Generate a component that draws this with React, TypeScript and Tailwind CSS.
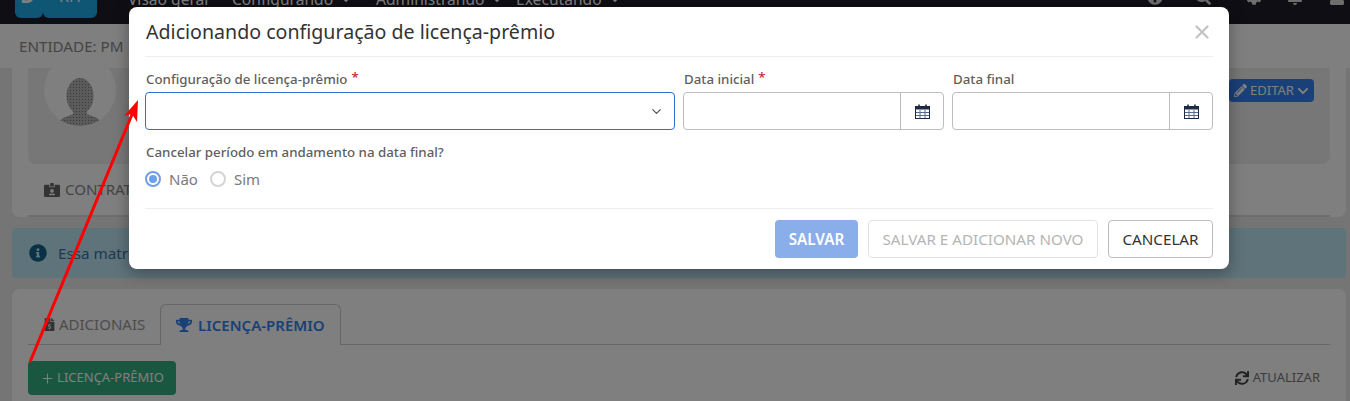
import {
  FaBell,
  FaCaretDown,
  FaChevronDown,
  FaCog,
  FaFileInvoiceDollar,
  FaIdCardAlt,
  FaInfoCircle,
  FaPencilAlt,
  FaQuestionCircle,
  FaSearch,
  FaSync,
  FaTrophy,
  FaUser,
} from "react-icons/fa";
import { ChevronDown, Plus, X } from "lucide-react";

const menu = [
  { label: "Visão geral", caret: false, width: "w-[104px]" },
  { label: "Configurando", caret: true, width: "w-[144px]" },
  { label: "Administrando", caret: true, width: "w-[140px]" },
  { label: "Executando", caret: true, width: "w-[120px]" },
];

function CalendarIcon() {
  return (
    <svg width="15" height="15" viewBox="0 0 15 15" fill="none">
      <rect x="0.5" y="2.5" width="14" height="12" fill="#fff" stroke="#1f2a44" />
      <rect x="0.5" y="2.5" width="14" height="3" fill="#1f2a44" />
      <path d="M5 6v8M10 6v8M1 8.5h13M1 11.5h13" stroke="#5b6b8c" />
      <path d="M4 0.5v3M11 0.5v3" stroke="#1f2a44" strokeWidth="1.6" />
    </svg>
  );
}

function DateInput({ label, required }: { label: string; required?: boolean }) {
  return (
    <div className="w-[261px]">
      <label className="flex h-[20px] items-center gap-1 pl-px text-[13.3px] font-medium text-[#5f5f5f]">
        {label}
        {required && <span className="-mt-1 text-[#c8232c]">*</span>}
      </label>
      <div className="mt-[2px] flex h-[38px] rounded border border-[#bdbdbd]">
        <div className="flex-1" />
        <div className="flex w-[43px] items-center justify-center border-l border-[#bdbdbd]">
          <CalendarIcon />
        </div>
      </div>
    </div>
  );
}

function Radio({ label, checked }: { label: string; checked?: boolean }) {
  return (
    <div className="flex items-center gap-[8px] text-[15px] text-[#7a7a7a]">
      <span
        className={
          checked
            ? "flex size-[16px] items-center justify-center rounded-full border-2 border-[#6f9fe8]"
            : "size-[16px] rounded-full border-2 border-[#d4d4d4]"
        }
      >
        {checked && <span className="size-[8px] rounded-full bg-[#6f9fe8]" />}
      </span>
      {label}
    </div>
  );
}

export default function App() {
  return (
    <div className="relative h-[401px] w-[1350px] overflow-hidden bg-[#ebebeb] [font-family:'Noto_Sans',sans-serif]">
      {/* pagina por tras */}
      <header className="-mt-6 flex h-[48px] items-center justify-between bg-[#1c1c28] pl-[15px] pr-[5px] text-white">
        <div className="flex items-center">
          <div className="flex h-[36px] w-[82px]">
            <div className="w-[28px] rounded-b-md bg-[#1eaae8] pl-[5px] pt-[2px] text-[20px] font-bold leading-[24px]">
              D
            </div>
            <div className="flex-1 rounded-b-md bg-[#1eaae8] pl-[16px] pt-[2px] text-[16px] leading-[24px]">
              RH
            </div>
          </div>
          <nav className="ml-[31px] flex items-center text-[15.6px]">
            {menu.map((m) => (
              <div key={m.label} className={`flex items-center gap-2 ${m.width}`}>
                {m.label}
                {m.caret && <FaCaretDown size={10} />}
              </div>
            ))}
          </nav>
        </div>
        <div className="-mt-[6px] flex items-center text-[16px] text-[#dddddd]">
          <FaQuestionCircle />
          <FaSearch className="ml-[32px]" />
          <FaCog className="ml-[35px]" />
          <FaBell className="ml-[25px]" />
          <FaUser className="ml-[26px]" />
        </div>
      </header>

      <div className="flex h-[44px] items-center bg-white px-[19px] text-[15.2px] text-[#8a8a8a]">
        ENTIDADE: PM
      </div>

      <main className="pl-[12px] pr-[4px]">
        <section className="h-[149px] overflow-hidden rounded-b-lg bg-white px-[16px]">
          <div className="flex h-[96px] items-start justify-between overflow-hidden rounded-b-lg bg-[#eeeeee] px-[16px]">
            <div className="-mt-[14px] flex size-[72px] items-end justify-center overflow-hidden rounded-full bg-white">
              <svg width="44" height="48" viewBox="0 0 44 48">
                <defs>
                  <pattern id="pontos" width="3" height="3" patternUnits="userSpaceOnUse">
                    <rect width="3" height="3" fill="#b6b6b6" />
                    <rect width="1" height="1" fill="#777777" />
                  </pattern>
                </defs>
                <ellipse cx="22" cy="18" rx="13.5" ry="18" fill="url(#pontos)" />
                <path d="M15 30h14v6l10 4q5 3 5 8H0q0-5 5-8l10-4z" fill="url(#pontos)" />
              </svg>
            </div>
            <button className="mt-[11px] flex h-[23px] w-[85px] items-center justify-center gap-[3px] rounded bg-[#3480f0] text-[13px] text-white">
              <FaPencilAlt size={13} />
              EDITAR
              <FaChevronDown size={12} />
            </button>
          </div>
          <div className="flex h-[53px] items-center gap-[5px] border-b-2 border-[#dcdcdc] pl-[16px] text-[15px] text-[#888888]">
            <FaIdCardAlt size={16} className="text-[#666666]" />
            CONTRATOS
          </div>
        </section>

        <div className="mt-[11px] flex h-[50px] items-center gap-[11px] rounded bg-[#bee6f6] pl-[17px] text-[15.2px] text-[#38749f]">
          <FaInfoCircle size={18} className="text-[#14648f]" />
          Essa matrícula
        </div>

        <section className="mt-[11px] h-[120px] rounded-lg bg-white px-[16px] pt-[15px]">
          <div className="flex h-[41px] items-stretch border-b border-[#cccccc] text-[15px]">
            <div className="flex w-[132px] items-center gap-[3px] pl-[15px] text-[#999999]">
              <FaFileInvoiceDollar size={13} className="text-[#666666]" />
              ADICIONAIS
            </div>
            <div className="-mb-px flex w-[181px] items-center gap-[6px] rounded-t-md border border-b-0 border-[#cccccc] bg-white pl-[15px] font-semibold text-[#3480f0]">
              <FaTrophy size={16} />
              LICENÇA-PRÊMIO
            </div>
          </div>
          <div className="mt-[16px] flex items-center justify-between pr-[10px]">
            <button className="flex h-[34px] w-[148px] items-center justify-center gap-[2px] rounded bg-[#34ae80] text-[13px] text-white">
              <Plus size={15} strokeWidth={1.75} />
              LICENÇA-PRÊMIO
            </button>
            <div className="flex items-center gap-[4px] text-[13px] text-[#777777]">
              <FaSync size={14} className="text-[#444444]" />
              ATUALIZAR
            </div>
          </div>
        </section>
      </main>

      <div className="absolute inset-0 bg-black/50" />

      {/* modal */}
      <div className="absolute left-[129px] top-[7px] h-[262px] w-[1100px] rounded-lg bg-white px-[16px] shadow-[0_4px_16px_rgba(0,0,0,0.35)]">
        <div className="flex h-[50px] items-center justify-between border-b border-[#eeeeee] pl-px">
          <h1 className="text-[19.6px] text-[#333333]">Adicionando configuração de licença-prêmio</h1>
          <X size={22} strokeWidth={2.5} className="text-[#c4c4c4]" />
        </div>

        <div className="mt-[13px] flex gap-[8px]">
          <div className="w-[530px]">
            <label className="flex h-[20px] items-center gap-1 pl-px text-[13.3px] font-medium text-[#5f5f5f]">
              Configuração de licença-prêmio
              <span className="-mt-1 text-[#c8232c]">*</span>
            </label>
            <div className="mt-[2px] flex h-[38px] items-center justify-end rounded border border-[#2f6fd0] pr-[10px]">
              <ChevronDown size={15} className="text-[#555555]" />
            </div>
          </div>
          <DateInput label="Data inicial" required />
          <DateInput label="Data final" />
        </div>

        <p className="mt-[12px] pl-px text-[13.3px] font-medium leading-[20px] text-[#5f5f5f]">
          Cancelar período em andamento na data final?
        </p>
        <div className="mt-[7px] flex h-[20px] items-center gap-[12px]">
          <Radio label="Não" checked />
          <Radio label="Sim" />
        </div>

        <div className="mt-[19px] flex justify-end gap-[10px] border-t border-[#eeeeee] pt-[11px] text-[15.2px]">
          <button className="h-[38px] w-[83px] rounded bg-[#8aaeea] font-semibold text-white">SALVAR</button>
          <button className="h-[38px] w-[230px] rounded border border-[#e2e2e2] text-[#b5b5b5]">
            SALVAR E ADICIONAR NOVO
          </button>
          <button className="h-[38px] w-[105px] rounded border border-[#bdbdbd] text-[#333333]">CANCELAR</button>
        </div>
      </div>

      {/* seta vermelha */}
      <svg className="absolute inset-0" width="1350" height="401" fill="none">
        <path d="M30 362 L133 112" stroke="#ff0000" strokeWidth="3" />
        <path d="M138 100 L137 122 L132 114 L124 116 Z" fill="#ff0000" />
      </svg>
    </div>
  );
}
